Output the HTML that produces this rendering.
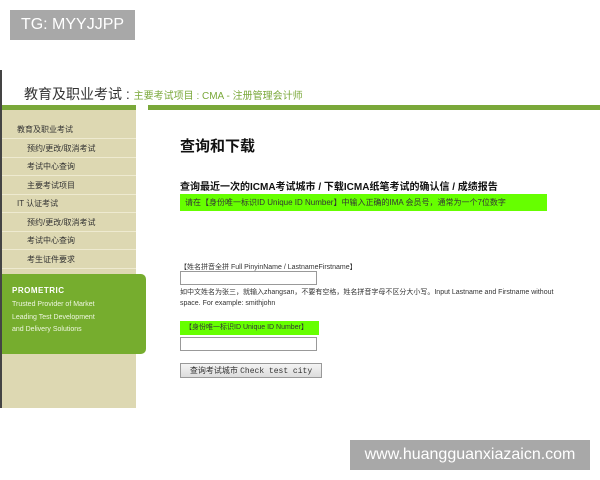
<!DOCTYPE html>
<html><head><meta charset="utf-8"><style>
*{margin:0;padding:0;box-sizing:border-box}
body{width:600px;height:480px;background:#fff;position:relative;overflow:hidden;font-family:"Liberation Sans","Noto Sans CJK SC",sans-serif;color:#222}
.a{position:absolute}
.wm{background:#a8a8a8;color:#fff;font-size:16px;line-height:30px;text-align:center}
.nav div{position:absolute;left:0;width:134px;height:18px;border-bottom:1px solid #eeead0;font-size:8px;line-height:18px;color:#333}
.inp{border:1px solid #999;background:#fff;width:137px;height:14px}
.hl{background:#66ff00;color:#333;font-size:8px}
</style></head><body>
<div class="a" style="left:0;top:70px;width:2px;height:338px;background:#444"></div>
<div class="a" style="left:24px;top:84px;font-size:14px;color:#333;white-space:nowrap">教育及职业考试 : <span style="font-size:10px;color:#7aa83a">主要考试项目 : CMA - 注册管理会计师</span></div>
<div class="a" style="left:2px;top:105px;width:134px;height:5px;background:#7aa83a"></div>
<div class="a" style="left:148px;top:105px;width:452px;height:5px;background:#7aa83a"></div>
<div class="a" style="left:2px;top:110px;width:134px;height:298px;background:#ddd8b2"></div>
<div class="a nav" style="left:2px;top:121px">
<div style="top:0;padding-left:15px">教育及职业考试</div>
<div style="top:18.5px;padding-left:25px">预约/更改/取消考试</div>
<div style="top:37px;padding-left:25px">考试中心查询</div>
<div style="top:55.5px;padding-left:25px">主要考试项目</div>
<div style="top:74px;padding-left:15px">IT 认证考试</div>
<div style="top:92.5px;padding-left:25px">预约/更改/取消考试</div>
<div style="top:111px;padding-left:25px">考试中心查询</div>
<div style="top:129.5px;padding-left:25px">考生证件要求</div>
</div>
<div class="a" style="left:2px;top:274px;width:144px;height:80px;background:#76ad2e;border-radius:0 5px 5px 0;color:#eef6e0;padding:12px 0 0 10px">
<div style="font-size:8px;font-weight:bold;color:#fff;letter-spacing:.5px">PROMETRIC</div>
<div style="font-size:7px;line-height:12.5px;margin-top:4px;white-space:nowrap">Trusted Provider of Market<br>Leading Test Development<br>and Delivery Solutions</div>
</div>
<div class="a" style="left:180px;top:135px;font-size:15px;font-weight:bold;color:#111">查询和下载</div>
<div class="a" style="left:180px;top:178px;font-size:10px;font-weight:bold;color:#111;white-space:nowrap">查询最近一次的ICMA考试城市 / 下载ICMA纸笔考试的确认信 / 成绩报告</div>
<div class="a hl" style="left:180px;top:194px;width:367px;height:17px;line-height:17px;padding-left:5px;white-space:nowrap">请在【身份唯一标识ID Unique ID Number】中输入正确的IMA 会员号，通常为一个7位数字</div>
<div class="a" style="left:180px;top:262px;font-size:7px;color:#333;white-space:nowrap">【姓名拼音全拼 Full PinyinName / LastnameFirstname】</div>
<div class="a inp" style="left:180px;top:271px"></div>
<div class="a" style="left:180px;top:287px;font-size:7px;line-height:11px;color:#333;width:420px;white-space:nowrap">如中文姓名为张三，就输入zhangsan，不要有空格，姓名拼音字母不区分大小写。Input Lastname and Firstname without<br>space. For example: smithjohn</div>
<div class="a hl" style="left:180px;top:321px;width:139px;height:14px;line-height:14px;font-size:7px;padding-left:5px;white-space:nowrap">【身份唯一标识ID Unique ID Number】</div>
<div class="a inp" style="left:180px;top:337px"></div>
<div class="a" style="left:180px;top:363px;width:142px;height:15px;border:1px solid #999;background:linear-gradient(#f4f4f4,#dcdcdc);font-size:8px;line-height:13px;text-align:center;color:#333;white-space:nowrap">查询考试城市 <span style="font-family:'Liberation Mono',monospace">Check test city</span></div>
<div class="a wm" style="left:10px;top:10px;width:125px;height:30px">TG: MYYJJPP</div>
<div class="a wm" style="left:350px;top:440px;width:240px;height:30px">www.huangguanxiazaicn.com</div>
</body></html>
